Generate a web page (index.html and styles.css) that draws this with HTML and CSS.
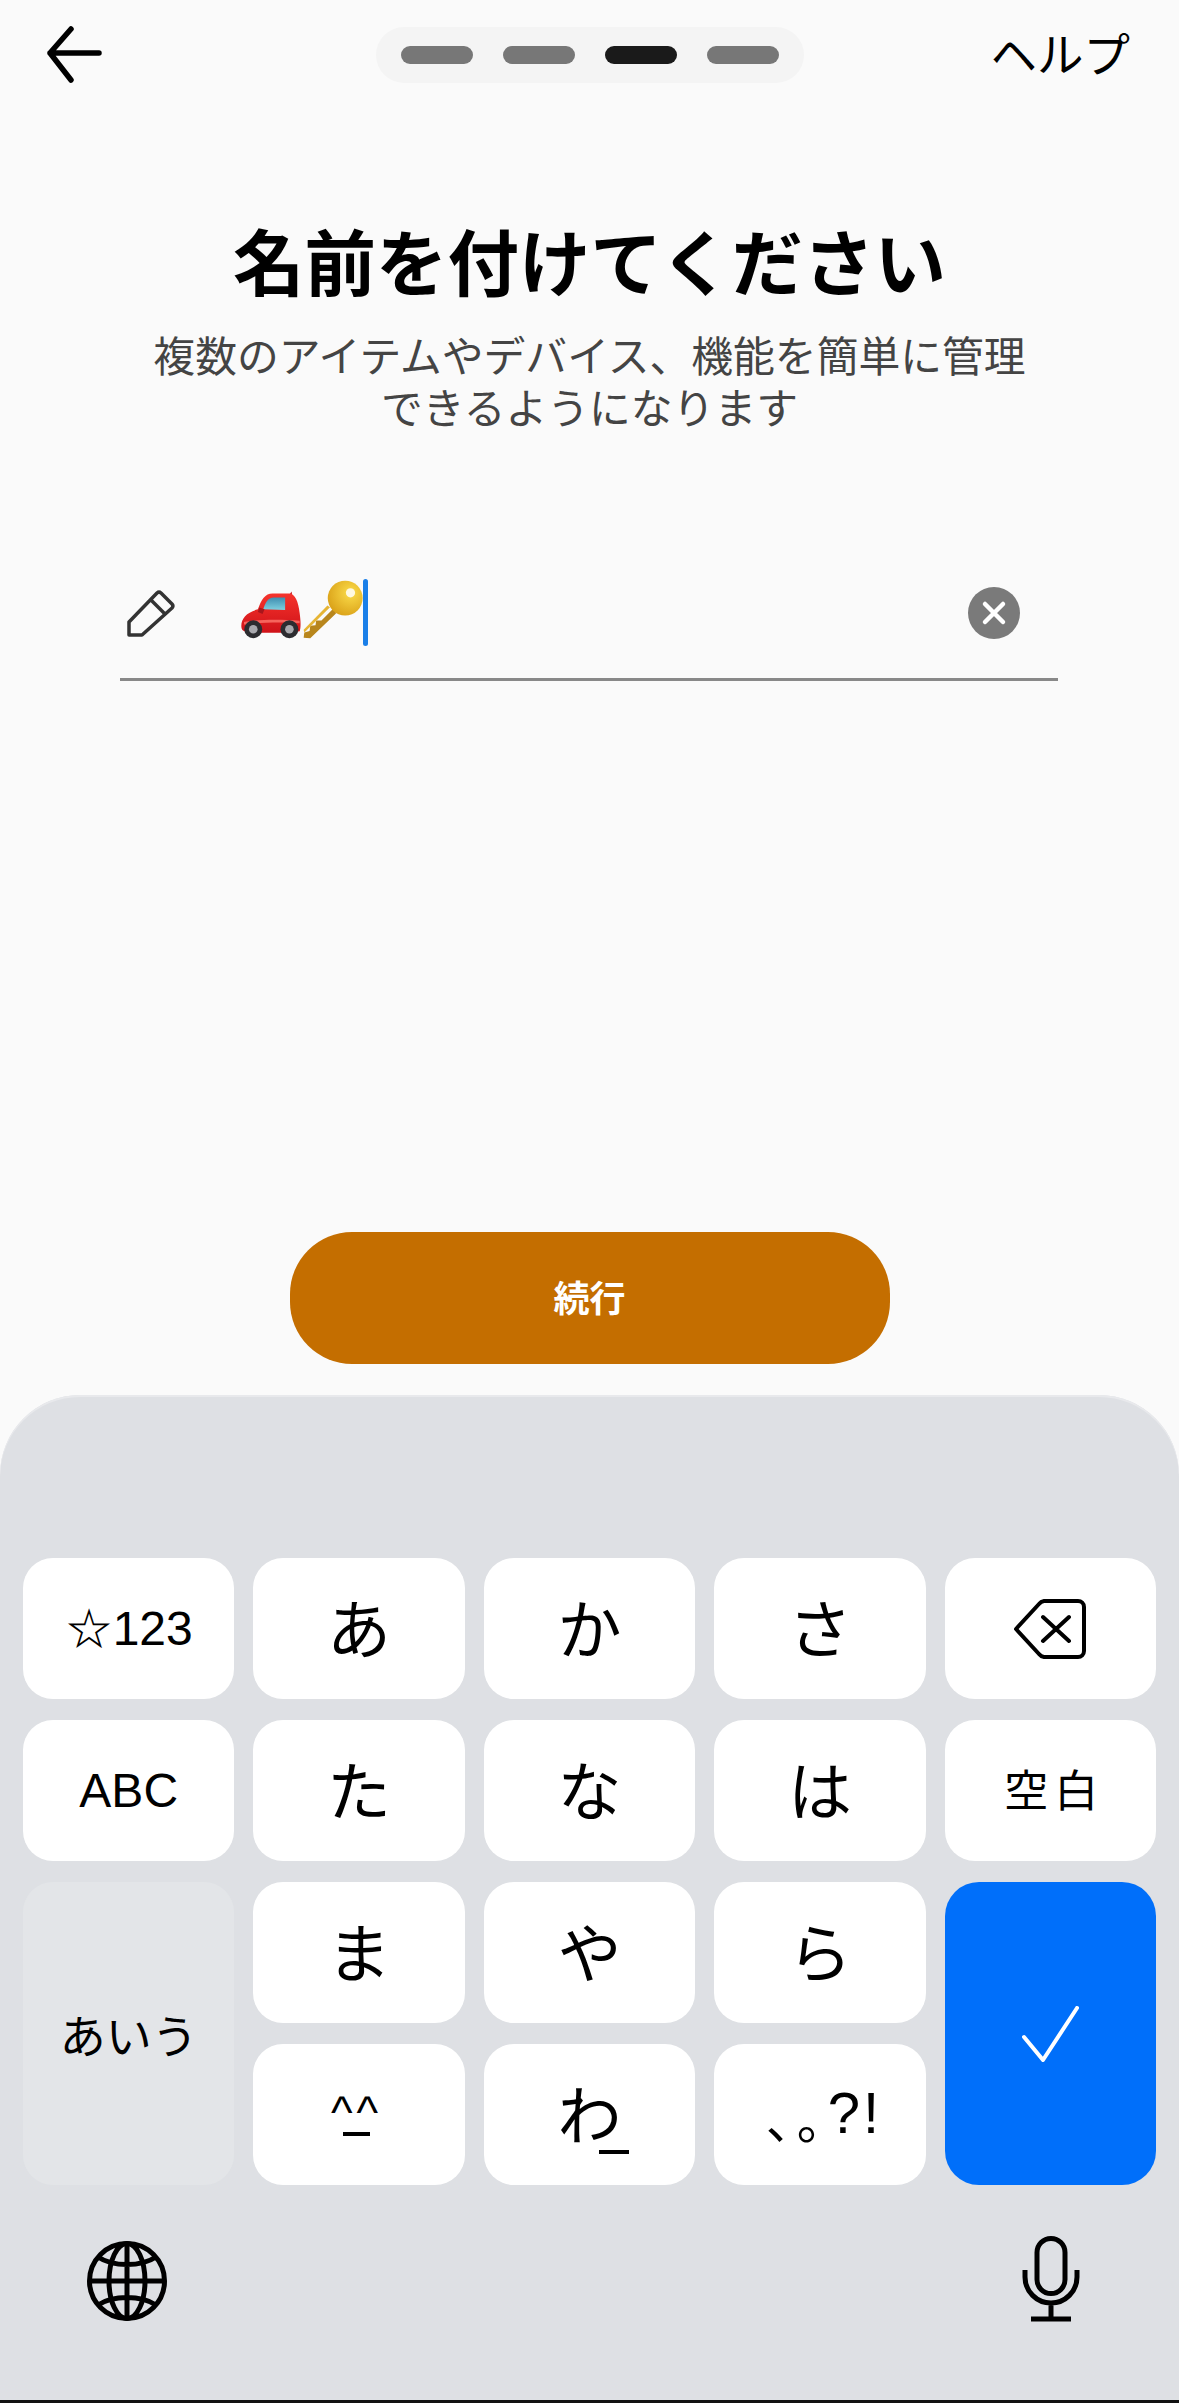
FILE: index.html
```html
<!DOCTYPE html>
<html lang="ja">
<head>
    <meta charset="UTF-8">
    <meta name="viewport" content="width=device-width, initial-scale=1.0">
    <title>名前を付けてください</title>
    <link rel="stylesheet" href="styles.css">
</head>
<body>

    <!-- Setup step -->
    <div class="screen">
        <div class="top-bar">
            <svg class="back-icon" viewBox="3 0 56 58">
                <path d="M6 27H55M27 3L6 27L27 54"/>
            </svg>
            <div class="steps">
                <span class="step"></span>
                <span class="step"></span>
                <span class="step step-current"></span>
                <span class="step"></span>
            </div>
            <div class="help">ヘルプ</div>
        </div>

        <h1 class="title">名前を付けてください</h1>
        <p class="subtitle">複数のアイテムやデバイス、機能を簡単に管理<br>できるようになります</p>

        <div class="name-field">
            <svg class="pencil-icon" viewBox="0 0 48 48">
                <path d="M2 46V33L30 4a3 3 0 0 1 4 0L45 15a3 3 0 0 1 0 4L15 46ZM24 11L38 25"/>
            </svg>
            <svg class="car-icon" viewBox="60 95 190 150">
                <defs>
                    <linearGradient id="carBody" x1="0" y1="0" x2="0" y2="1">
                        <stop offset="0" stop-color="#f5332c"/>
                        <stop offset="1" stop-color="#cf1219"/>
                    </linearGradient>
                    <linearGradient id="carGlass" x1="0" y1="0" x2="0" y2="1">
                        <stop offset="0" stop-color="#3f8db0"/>
                        <stop offset="1" stop-color="#7fd0e0"/>
                    </linearGradient>
                </defs>
                <path fill="#c9242a" d="M208 106l8-10 2 18z"/>
                <path fill="url(#carBody)" d="M64 200c0-24 18-42 50-50 10-30 22-48 44-48h50c18 0 28 24 32 60 3 22 4 42 0 54-40 6-130 6-160 2-10-2-16-6-16-18z"/>
                <path fill="url(#carGlass)" d="M130 150c6-20 14-36 32-36h34v38z"/>
                <path fill="#a8161c" d="M118 144l16 6-6 14-14-6z"/>
                <path fill="#f6645c" d="M72 188c40-8 110-8 168-4v8c-50-4-128-2-168 4z"/>
                <circle cx="100" cy="210" r="27" fill="#2c2c30"/>
                <circle cx="100" cy="210" r="13" fill="#a9a9ae"/>
                <circle cx="209" cy="210" r="27" fill="#2c2c30"/>
                <circle cx="209" cy="210" r="13" fill="#a9a9ae"/>
            </svg>
            <svg class="key-icon" viewBox="250 60 185 185">
                <defs>
                    <radialGradient id="keyBow" cx="0.65" cy="0.35" r="0.8">
                        <stop offset="0" stop-color="#fbdc4a"/>
                        <stop offset="1" stop-color="#d69a12"/>
                    </radialGradient>
                </defs>
                <path fill="#b8861c" d="M350 165L272 240l-20-2 2-16 16-4 2-16 16-2 2-14 16 0 40-40z"/>
                <path fill="#e6b534" d="M332 146L254 222l-2-8 72-74z"/>
                <circle cx="378" cy="118" r="53" fill="url(#keyBow)"/>
                <circle cx="394" cy="102" r="14" fill="#fff9e0"/>
            </svg>
            <span class="cursor"></span>
            <svg class="clear-icon" viewBox="0 0 52 52">
                <circle cx="26" cy="26" r="26"/>
                <path d="M17 17L35 35M35 17L17 35"/>
            </svg>
        </div>

        <button class="continue-btn" type="button">続行</button>
    </div>

    <!-- Keyboard -->
    <div class="keyboard">
        <div class="keys">
            <div class="key key-label">☆123</div>
            <div class="key">あ</div>
            <div class="key">か</div>
            <div class="key">さ</div>
            <div class="key key-icon-only">
                <svg class="delete-icon" viewBox="33 18 76 64">
                    <path d="M37 50L60 25a8 8 0 0 1 5-3H99a6 6 0 0 1 6 6V72a6 6 0 0 1-6 6H65a8 8 0 0 1-5-3ZM64 38L90 62M90 38L64 62"/>
                </svg>
            </div>

            <div class="key key-label">ABC</div>
            <div class="key">た</div>
            <div class="key">な</div>
            <div class="key">は</div>
            <div class="key key-space">空白</div>

            <div class="key key-kana">あいう</div>
            <div class="key">ま</div>
            <div class="key">や</div>
            <div class="key">ら</div>
            <div class="key key-enter">
                <svg class="check-icon" viewBox="0 0 57 56">
                    <path d="M2 31L21 54L55 2"/>
                </svg>
            </div>

            <div class="key key-face">
                <span class="face-eyes">^^</span>
                <span class="face-mouth"></span>
            </div>
            <div class="key key-wa">わ</div>
            <div class="key key-punct">、。<span class="punct-latin">?!</span></div>
        </div>

        <div class="keyboard-bottom">
            <svg class="globe-icon" viewBox="0 0 80 80">
                <circle cx="40" cy="40" r="37.5"/>
                <ellipse cx="40" cy="40" rx="18" ry="37.5"/>
                <path d="M40 3V77M3 40H77M11 16C26 26 54 26 69 16M11 64C26 54 54 54 69 64"/>
            </svg>
            <svg class="mic-icon" viewBox="0 0 58 86">
                <rect x="15" y="2.5" width="28" height="55" rx="14"/>
                <path d="M3 34V41a26 26 0 0 0 52 0V34M29 67V83M9 83H49"/>
            </svg>
        </div>
    </div>

</body>
</html>
```

FILE: styles.css
```css
body {
    margin: 0;
    width: 1179px;
    height: 2403px;
    overflow: hidden;
    background-color: #fafafa;
    color: #000;
    font-family: "Noto Sans CJK JP", "Liberation Sans", sans-serif;
}
svg {
    display: block;
    fill: none;
}
.screen {
    height: 1395px;
    display: flex;
    flex-direction: column;
    align-items: center;
}

/* top bar */
.top-bar {
    align-self: stretch;
    display: grid;
    grid-template-columns: 1fr auto 1fr;
    align-items: center;
    padding: 26px 47px 0;
}
.back-icon {
    width: 56px;
    height: 58px;
    stroke: #000;
    stroke-width: 5.5;
    stroke-linecap: round;
    stroke-linejoin: round;
}
.steps {
    display: flex;
    gap: 30px;
    padding: 19px 25px;
    background-color: #f4f4f4;
    border-radius: 28px;
}
.step {
    width: 72px;
    height: 18px;
    border-radius: 9px;
    background-color: #777;
}
.step-current {
    background-color: #1a1a1a;
}
.help {
    justify-self: end;
    margin: -6px 2px 0 0;
    font-size: 46.5px;
    line-height: 50px;
}

/* heading */
.title {
    margin: 135px 0 0;
    font-size: 71.5px;
    line-height: 80px;
    font-weight: 700;
}
.subtitle {
    margin: 29px 0 0;
    font-size: 41.8px;
    line-height: 52px;
    text-align: center;
    color: #444;
}

/* name input */
.name-field {
    align-self: stretch;
    display: flex;
    align-items: center;
    margin: 147px 121px 0 120px;
    padding-bottom: 32px;
    border-bottom: 3px solid #888;
}
.pencil-icon {
    width: 48px;
    height: 48px;
    margin-left: 7px;
    stroke: #333;
    stroke-width: 3.5;
    stroke-linejoin: round;
}
.car-icon {
    width: 63px;
    height: 50px;
    margin-left: 65px;
    margin-top: 6px;
}
.key-icon {
    width: 61px;
    height: 61px;
    margin-top: -6px;
}
.cursor {
    width: 5px;
    height: 67px;
    margin-left: -1px;
    border-radius: 3px;
    background-color: #1a7fe8;
}
.clear-icon {
    width: 52px;
    height: 52px;
    margin-left: auto;
    margin-right: 38px;
}
.clear-icon circle {
    fill: #7a7a7a;
}
.clear-icon path {
    stroke: #fff;
    stroke-width: 4.5;
    stroke-linecap: round;
}

/* continue */
.continue-btn {
    width: 600px;
    height: 132px;
    margin-top: auto;
    margin-bottom: 31px;
    padding: 0 0 5px;
    border: none;
    border-radius: 62px;
    background-color: #c46e00;
    color: #fff;
    font-family: inherit;
    font-size: 36px;
    font-weight: 700;
}

/* keyboard */
.keyboard {
    height: 1008px;
    box-sizing: border-box;
    padding-top: 163px;
    background-color: #dee0e4;
    border-radius: 80px 80px 0 0;
    border-bottom: 3px solid #111;
    box-shadow: inset 0 2px 0 #e8e9ec;
}
.keys {
    display: grid;
    grid-template-columns: repeat(5, 1fr);
    grid-template-rows: repeat(4, 141px);
    gap: 21px 19px;
    padding: 0 23px;
}
.key {
    display: flex;
    align-items: center;
    justify-content: center;
    box-sizing: border-box;
    padding-bottom: 8px;
    background-color: #fff;
    border-radius: 30px;
    font-size: 64px;
    line-height: 1;
}
.key-label {
    padding-bottom: 0;
    font-family: "Liberation Sans", sans-serif;
    font-size: 48px;
}
.key-icon-only {
    padding-bottom: 0;
}
.key-space {
    padding: 0 0 5px 8px;
    font-size: 44px;
    letter-spacing: 6px;
}
.key-kana {
    grid-row: span 2;
    padding-bottom: 2px;
    background-color: #e3e5e8;
    font-size: 46px;
}
.key-enter {
    grid-column: 5;
    grid-row: 3 / span 2;
    padding-bottom: 0;
    background-color: #006ffa;
    border-radius: 34px;
}
.key-face {
    flex-direction: column;
    padding: 0 5px 0 0;
}
.face-eyes {
    font-family: "Liberation Sans", sans-serif;
    font-size: 46px;
    line-height: 36px;
    letter-spacing: 4px;
}
.face-mouth {
    width: 27px;
    height: 4px;
    margin-top: 2px;
    background-color: #000;
}
.key-wa {
    position: relative;
}
/* small-kana mark under the corner of the key */
.key-wa::after {
    content: "";
    position: absolute;
    left: 115px;
    top: 106px;
    width: 30px;
    height: 4px;
    background-color: #000;
}
.key-punct {
    align-items: flex-end;
    padding: 0 0 43px 8px;
    font-size: 50px;
    letter-spacing: -19px;
    text-spacing-trim: space-all;
}
.punct-latin {
    font-family: "Liberation Sans", sans-serif;
    font-size: 58px;
    letter-spacing: 3px;
}
.delete-icon {
    width: 76px;
    height: 64px;
    stroke: #000;
    stroke-width: 4;
    stroke-linecap: round;
    stroke-linejoin: round;
}
.check-icon {
    width: 57px;
    height: 56px;
    stroke: #fff;
    stroke-width: 4;
    stroke-linecap: round;
    stroke-linejoin: round;
}
.keyboard-bottom {
    display: flex;
    justify-content: space-between;
    align-items: flex-start;
    padding: 51px 99px 0 87px;
}
.globe-icon {
    width: 80px;
    height: 80px;
    margin-top: 5px;
    stroke: #000;
    stroke-width: 5;
}
.mic-icon {
    width: 58px;
    height: 86px;
    stroke: #000;
    stroke-width: 5;
}
```
